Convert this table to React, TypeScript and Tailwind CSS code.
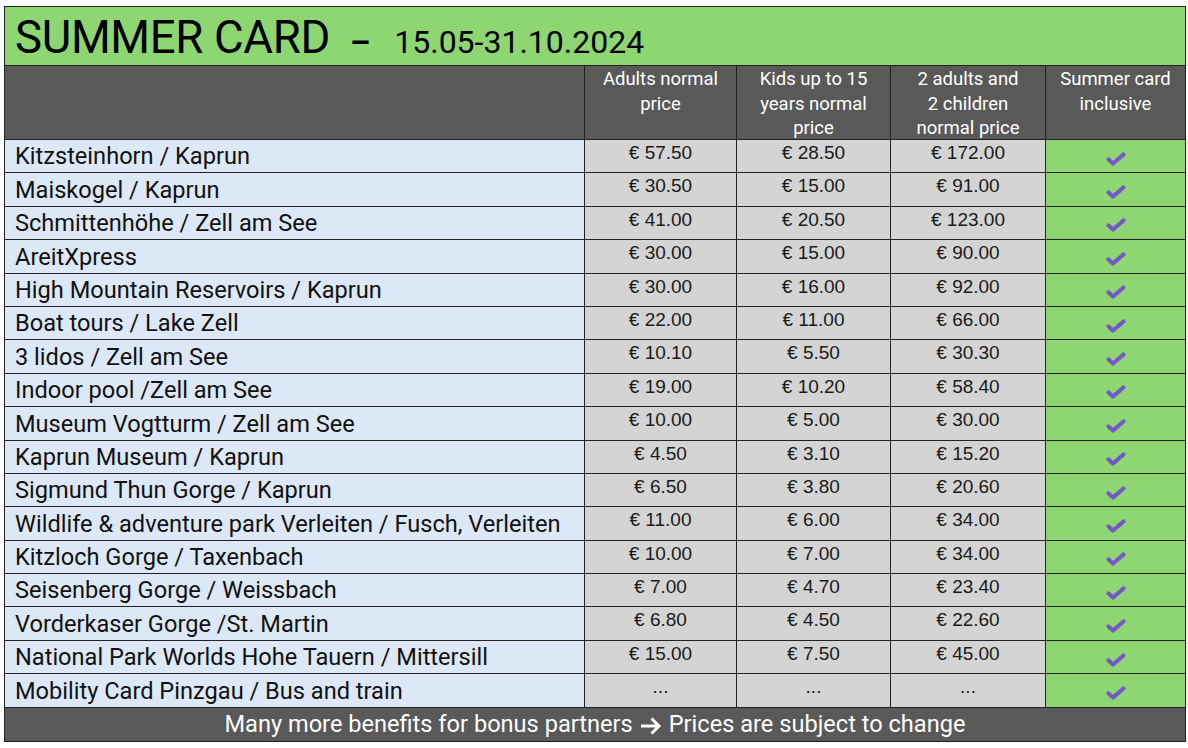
const rows: [string, string, string, string][] = [
  ["Kitzsteinhorn / Kaprun", "€ 57.50", "€ 28.50", "€ 172.00"],
  ["Maiskogel / Kaprun", "€ 30.50", "€ 15.00", "€ 91.00"],
  ["Schmittenhöhe / Zell am See", "€ 41.00", "€ 20.50", "€ 123.00"],
  ["AreitXpress", "€ 30.00", "€ 15.00", "€ 90.00"],
  ["High Mountain Reservoirs / Kaprun", "€ 30.00", "€ 16.00", "€ 92.00"],
  ["Boat tours / Lake Zell", "€ 22.00", "€ 11.00", "€ 66.00"],
  ["3 lidos / Zell am See", "€ 10.10", "€ 5.50", "€ 30.30"],
  ["Indoor pool /Zell am See", "€ 19.00", "€ 10.20", "€ 58.40"],
  ["Museum Vogtturm / Zell am See", "€ 10.00", "€ 5.00", "€ 30.00"],
  ["Kaprun Museum / Kaprun", "€ 4.50", "€ 3.10", "€ 15.20"],
  ["Sigmund Thun Gorge / Kaprun", "€ 6.50", "€ 3.80", "€ 20.60"],
  ["Wildlife & adventure park Verleiten / Fusch, Verleiten", "€ 11.00", "€ 6.00", "€ 34.00"],
  ["Kitzloch Gorge / Taxenbach", "€ 10.00", "€ 7.00", "€ 34.00"],
  ["Seisenberg Gorge / Weissbach", "€ 7.00", "€ 4.70", "€ 23.40"],
  ["Vorderkaser Gorge /St. Martin", "€ 6.80", "€ 4.50", "€ 22.60"],
  ["National Park Worlds Hohe Tauern / Mittersill", "€ 15.00", "€ 7.50", "€ 45.00"],
  ["Mobility Card Pinzgau / Bus and train", "...", "...", "..."],
];

const headers = [
  ["Adults normal", "price"],
  ["Kids up to 15", "years normal", "price"],
  ["2 adults and", "2 children", "normal price"],
  ["Summer card", "inclusive"],
];

function Check() {
  return (
    <svg width="22" height="16" viewBox="0 0 22 16" className="mt-[5px]">
      <path
        d="M3.5 8.5 L8 12.5 L18.5 3.5"
        fill="none"
        stroke="#7557c7"
        strokeWidth="4.2"
        strokeLinecap="round"
        strokeLinejoin="round"
      />
    </svg>
  );
}

function Arrow() {
  return (
    <svg width="24" height="20" viewBox="0 0 24 20" className="mx-[6px] mt-[2px]">
      <path d="M2 10 H20 M12.5 2.5 L20 10 L12.5 17.5" fill="none" stroke="white" strokeWidth="3" />
    </svg>
  );
}

export default function App() {
  return (
    <div className="h-[748px] w-[1188px] bg-white pl-[4px] pt-[6px]">
      <div className="w-[1182px] border border-[#222] font-['Roboto',sans-serif]">
        <div className="flex h-[58px] items-baseline bg-[#8dd672] pt-[8px] pl-[10px] text-black">
          <span className="text-[45.5px] leading-none tracking-[-0.3px]">SUMMER CARD</span>
          <span className="ml-[20px] text-[32px] leading-none font-bold">–</span>
          <span className="ml-[24px] text-[32px] leading-none">15.05-31.10.2024</span>
        </div>
        <div className="grid grid-cols-[580px_152px_154px_155px_139px] border-t border-[#222]">
          <div className="h-[73px] border-r border-[#222] bg-[#595959]" />
          {headers.map((h, i) => (
            <div
              key={i}
              className={`flex h-[73px] flex-col items-center bg-[#595959] pt-[1px] text-center text-[18.5px] leading-[24.5px] whitespace-nowrap text-white ${
                i < 3 ? "border-r border-[#222]" : ""
              }`}
            >
              {h.map((l) => (
                <span key={l}>{l}</span>
              ))}
            </div>
          ))}
          {rows.map(([name, a, k, f]) => (
            <div key={name} className="contents">
              <div className="flex h-[33.4px] items-center border-t border-r border-[#222] bg-[#dce8f5] pl-[10px] pt-[2px] text-[23.6px] leading-none text-[#111]">
                {name}
              </div>
              {[a, k, f].map((p, j) => (
                <div
                  key={j}
                  className="flex h-[33.4px] justify-center border-t border-r border-[#222] bg-[#d4d4d4] pt-[2px] font-['Liberation_Sans',sans-serif] text-[19px] leading-[22px] text-[#1a1a1a]"
                >
                  {p}
                </div>
              ))}
              <div className="flex h-[33.4px] items-center justify-center border-t border-[#222] bg-[#8dd672]">
                <Check />
              </div>
            </div>
          ))}
        </div>
        <div className="flex h-[34px] items-center justify-center border-t border-[#222] bg-[#595959] pt-[1px] text-[23.6px] leading-none text-white">
          Many more benefits for bonus partners
          <Arrow />
          Prices are subject to change
        </div>
      </div>
    </div>
  );
}
